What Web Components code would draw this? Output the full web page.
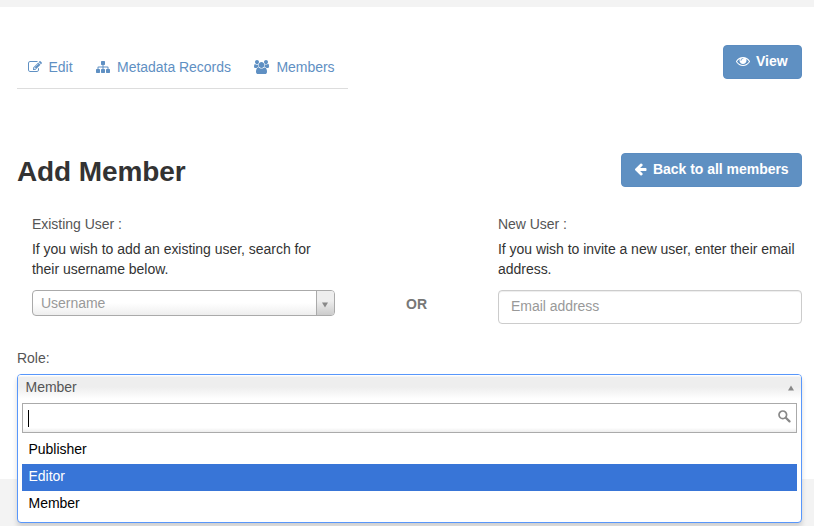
<!DOCTYPE html>
<html lang="en">
<head>
<meta charset="utf-8">
<title>Add Member</title>
<style>
html,body{margin:0;height:526px;overflow:hidden;background:#f3f3f3}
body{font:14px/20px "Liberation Sans",Arial,sans-serif;letter-spacing:-.03px;color:#444}
</style>
</head>
<body>
<member-page></member-page>
<script>
const define = (name, html, setup) => customElements.define(name, class extends HTMLElement {
  constructor() {
    super();
    const t = document.createElement('template');
    t.innerHTML = html;
    this.attachShadow({mode: 'open'}).append(t.content.cloneNode(true));
  }
  connectedCallback() { if (setup) setup(this, this.shadowRoot); }
});

const ICONS = {
  edit: [1792, 'M888 1184l116-116-152-152-116 116v56h96v96h56zm440-720q-16-16-33 1l-350 350q-17 17-1 33t33-1l350-350q17-17 1-33zm80 594v190q0 119-84.5 203.500t-203.500 84.500h-832q-119 0-203.500-84.500t-84.500-203.500v-832q0-119 84.500-203.500t203.500-84.500h832q63 0 117 25 15 7 18 23 3 17-9 29l-49 49q-14 14-32 8-23-6-45-6h-832q-66 0-113 47t-47 113v832q0 66 47 113t113 47h832q66 0 113-47t47-113v-126q0-13 9-22l64-64q15-15 35-7t20 29zm-96-738l288 288-672 672h-288v-288zm444 132l-92 92-288-288 92-92q28-28 68-28t68 28l152 152q28 28 28 68t-28 68z'],
  sitemap: [1792, 'M1792 1248v320q0 40-28 68t-68 28h-320q-40 0-68-28t-28-68v-320q0-40 28-68t68-28h96v-192h-512v192h96q40 0 68 28t28 68v320q0 40-28 68t-68 28h-320q-40 0-68-28t-28-68v-320q0-40 28-68t68-28h96v-192h-512v192h96q40 0 68 28t28 68v320q0 40-28 68t-68 28h-320q-40 0-68-28t-28-68v-320q0-40 28-68t68-28h96v-192q0-52 38-90t90-38h512v-192h-96q-40 0-68-28t-28-68v-320q0-40 28-68t68-28h320q40 0 68 28t28 68v320q0 40-28 68t-68 28h-96v192h512q52 0 90 38t38 90v192h96q40 0 68 28t28 68z'],
  users: [1920, 'M593 896q-162 5-265 128h-134q-82 0-138-40.500t-56-118.500q0-353 124-353 6 0 43.500 21t97.500 42.500 119 21.500q67 0 133-23-5 37-5 66 0 159 93 293zm1071 637q0 120-73 189.500t-194 69.500h-874q-121 0-194-69.500t-73-189.500q0-53 3.500-103.500t14-109 26.500-108.500 43-97.500 62-81 85.500-53.500 111.500-20q10 0 43 21.500t73 48 107 48 135 21.500 135-21.500 107-48 73-48 43-21.500q61 0 111.500 20t85.500 53.500 62 81 43 97.500 26.500 108.500 14 109 3.500 103.500zm-1024-1277q0 106-75 181t-181 75-181-75-75-181 75-181 181-75 181 75 75 181zm704 384q0 159-112.500 271.500t-271.500 112.500-271.500-112.500-112.500-271.500 112.500-271.500 271.500-112.500 271.500 112.500 112.500 271.500zm576 225q0 78-56 118.500t-138 40.500h-134q-103-123-265-128 93-134 93-293 0-29-5-66 66 23 133 23 59 0 119-21.500t97.500-42.500 43.500-21q124 0 124 353zm-128-609q0 106-75 181t-181 75-181-75-75-181 75-181 181-75 181 75 75 181z'],
  eye: [1792, 'M1664 960q-152-236-381-353 61 104 61 225 0 185-131.500 316.500t-316.500 131.500-316.500-131.500-131.500-316.500q0-121 61-225-229 117-381 353 133 205 333.500 326.500t434.500 121.500 434.500-121.500 333.500-326.500zm-720-384q0-20-14-34t-34-14q-125 0-214.500 89.500t-89.500 214.500q0 20 14 34t34 14 34-14 14-34q0-86 61-147t147-61q20 0 34-14t14-34zm848 384q0 34-20 69-140 230-376.500 368.500t-499.500 138.500-499.500-139-376.500-368q-20-35-20-69t20-69q140-229 376.500-368t499.500-139 499.500 139 376.500 368q20 35 20 69z'],
  back: [1664, 'M1600 896v128q0 53-32.500 90.500t-84.500 37.500h-704l293 294q38 36 38 90t-38 90l-75 76q-37 37-90 37-52 0-91-37l-651-652q-37-37-37-90 0-52 37-91l651-650q38-38 91-38 52 0 90 38l75 74q38 38 38 91t-38 91l-293 293h704q52 0 84.500 37.500t32.500 90.500z']
};

define('fa-icon', `<style>:host{display:block;flex:none}svg{display:block;height:14px;fill:currentColor;overflow:visible}</style><svg><path/></svg>`, (el, r) => {
  const [w, d] = ICONS[el.getAttribute('name')];
  const s = r.querySelector('svg');
  s.setAttribute('viewBox', `0 0 ${w} 1792`);
  s.style.width = w / 128 + 'px';
  r.querySelector('path').setAttribute('d', d);
});

define('nav-item', `<style>:host{display:block}a{display:flex;align-items:center;gap:7px;color:#5f90c3;white-space:nowrap}</style><a><slot name="icon"></slot><span><slot></slot></span></a>`);

define('action-button', `<style>:host{display:block;flex:none}
button{display:flex;align-items:center;gap:6.500px;box-sizing:border-box;width:100%;height:34px;margin:0;padding:0 11.500px 2px;border:1px solid #5b8cc0;border-radius:4px;background:#5f90c2;color:#fff;font:bold 14px/20px "Liberation Sans",Arial,sans-serif;letter-spacing:-.03px;white-space:nowrap}</style>
<button><slot name="icon"></slot><span><slot></slot></span></button>`);

define('user-field', `<style>:host{display:block}
.l{color:#555}p{margin:5px 0 11px;color:#333;white-space:nowrap}</style>
<div class="l"><slot name="label"></slot></div><p><slot name="hint"></slot></p><slot></slot>`);

define('user-select', `<style>:host{display:flex;box-sizing:border-box;height:26px;border:1px solid #aaa;border-radius:4px;background:linear-gradient(to bottom,#fff 50%,#eee);overflow:hidden;color:#999;line-height:24px}
span{flex:1;padding-left:8px}
i{display:flex;align-items:center;justify-content:center;width:17px;border-left:1px solid #aaa;background:linear-gradient(to bottom,#eee 40%,#ccc)}
svg{margin:4px 1px 0 0}</style>
<span><slot></slot></span><i><svg width="6" height="6"><path d="M0 0.500h6L3 5.500z" fill="#888"/></svg></i>`);

define('email-input', `<style>:host{display:block;box-sizing:border-box;height:34px;padding:5px 12px;border:1px solid #ccc;border-radius:4px;background:#fff;color:#999;box-shadow:inset 0 1px 1px rgba(0,0,0,.075)}</style><slot></slot>`);

define('role-option', `<style>:host{display:block;box-sizing:border-box;height:27px;padding:2px 6.500px 0;color:#000;line-height:20px}:host([active]){background:#3875d7;color:#fff}</style><slot></slot>`);

define('role-select', `<style>:host{display:block;position:relative;height:26px}
.box{box-sizing:border-box;position:absolute;top:0;left:0;width:100%;height:149px;border:1px solid #5897fb;border-radius:4px;background:#fff;box-shadow:0 4px 5px rgba(0,0,0,.15);overflow:visible}
.head{display:flex;height:24px;padding:0 7px 0 7.500px;justify-content:space-between;align-items:center;border-radius:3px 3px 0 0;background:linear-gradient(to bottom,#fff 0,#fff 1px,#eee 2px,#eee 50%,#fff);line-height:24px;color:#555}
.head svg{margin-top:2px}
.search{display:flex;justify-content:space-between;box-sizing:border-box;height:30px;margin:4px 4px 0;padding:6px 5px 0 5px;border:1px solid #aaa;background:linear-gradient(to bottom,#fff 85%,#eee 99%)}
.caret{width:1px;height:17px;background:#000}
.list{margin:4px 4px 0}</style>
<div class="box"><div class="head"><span><slot name="value"></slot></span><svg width="6" height="6"><path d="M0 5.500h6L3 0.500z" fill="#888"/></svg></div>
<div class="search"><div class="caret"></div><svg width="13" height="13"><circle cx="4.800" cy="4.800" r="3.800" fill="none" stroke="#888" stroke-width="1.700"/><path d="M7.800 7.800L11.500 11.400" stroke="#888" stroke-width="2.200" stroke-linecap="round"/></svg></div>
<div class="list"><slot></slot></div></div>`);

define('member-page', `<style>
:host{display:block;box-sizing:border-box;height:472px;margin-top:7px;padding:38px 12px 0 17px;background:#fff}
.top,.title{display:flex;justify-content:space-between;align-items:flex-start}
.top{height:108px}
nav{display:flex;gap:23.500px;box-sizing:border-box;width:331px;height:44px;padding:12px 0 0 10.500px;border-bottom:1px solid #ddd}
h1{margin:0;padding-top:3px;font-size:28px;line-height:32px;letter-spacing:-.1px;color:#333}
.title{height:61px}
.fields{display:flex;padding-left:15px;height:134px}
user-field{width:303px}user-field:last-child{width:304px}
.or{flex:1;text-align:center;font-weight:bold;color:#777;padding-top:80px}
.role{color:#555;margin-bottom:6px}
</style>
<div class="top"><nav>
<nav-item><fa-icon slot="icon" name="edit"></fa-icon>Edit</nav-item>
<nav-item><fa-icon slot="icon" name="sitemap"></fa-icon>Metadata Records</nav-item>
<nav-item><fa-icon slot="icon" name="users"></fa-icon>Members</nav-item></nav>
<action-button style="width:79px"><fa-icon slot="icon" name="eye"></fa-icon>View</action-button></div>
<div class="title"><h1>Add Member</h1><action-button style="width:181px"><fa-icon slot="icon" name="back"></fa-icon>Back to all members</action-button></div>
<div class="fields">
<user-field><span slot="label">Existing User :</span><span slot="hint">If you wish to add an existing user, search for<br>their username below.</span><user-select>Username</user-select></user-field>
<div class="or">OR</div>
<user-field><span slot="label">New User :</span><span slot="hint">If you wish to invite a new user, enter their email<br>address.</span><email-input>Email address</email-input></user-field>
</div>
<div class="role">Role:</div>
<role-select><span slot="value">Member</span><role-option>Publisher</role-option><role-option active>Editor</role-option><role-option>Member</role-option></role-select>`);
</script>
</body>
</html>
